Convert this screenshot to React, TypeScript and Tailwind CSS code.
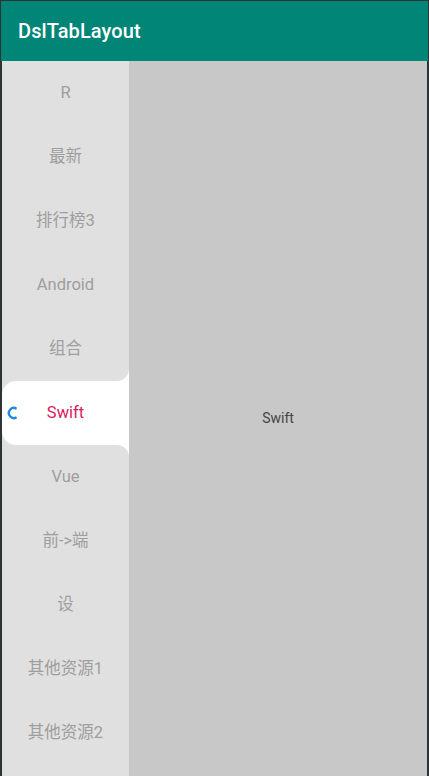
const tabs = ['R', '最新', '排行榜3', 'Android', '组合', 'Swift', 'Vue', '前->端', '设', '其他资源1', '其他资源2']
const selected = 5

function Spinner() {
  return (
    <svg width="12" height="16" viewBox="0 0 12 16" className="absolute left-[5px] top-[24px]">
      <path d="M9.6 3.8 A5 5 0 1 0 9.6 12.2" fill="none" stroke="#1e88e5" strokeWidth="2.4" strokeLinecap="butt" />
    </svg>
  )
}

function Indicator() {
  // white pill with concave flares on the right edge
  return (
    <svg width="127" height="88" viewBox="0 0 127 88" className="absolute left-0 top-[-12px]">
      <path
        d="M14 12 H115 A12 12 0 0 0 127 0 V88 A12 12 0 0 0 115 76 H14 A14 14 0 0 1 0 62 V26 A14 14 0 0 1 14 12 Z"
        fill="#ffffff"
      />
    </svg>
  )
}

export default function App() {
  return (
    <div className="w-[429px] h-[776px] flex flex-col bg-[#2f3336] font-['Roboto','Noto_Sans_CJK_SC',sans-serif] overflow-hidden">
      <div className="h-[60px] mt-px mx-[1px] bg-[#008577] flex items-center pl-[17px] pb-px shrink-0">
        <span className="text-white text-[20px] font-medium tracking-[0.1px]">DslTabLayout</span>
      </div>
      <div className="flex flex-1 ml-[2px] mr-[2px] min-h-0">
        <div className="w-[127px] bg-[#e0e0e0] flex flex-col">
          {tabs.map((t, i) => (
            <div key={t} className="relative h-[64px] flex items-center justify-center shrink-0">
              {i === selected && <Indicator />}
              {i === selected && <Spinner />}
              <span
                className={
                  'relative text-[16.5px] ' + (i === selected ? 'text-[#d81b60]' : 'text-[#9e9e9e]')
                }
              >
                {t}
              </span>
            </div>
          ))}
        </div>
        <div className="flex-1 bg-[#c8c8c8] flex items-center justify-center">
          <span className="text-[14px] text-[#444]">Swift</span>
        </div>
      </div>
    </div>
  )
}
